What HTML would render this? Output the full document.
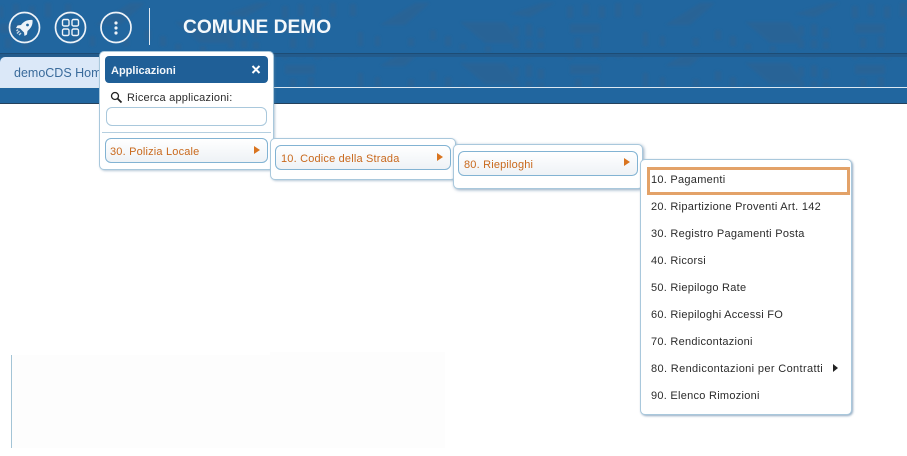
<!DOCTYPE html>
<html><head><meta charset="utf-8"><style>
*{box-sizing:border-box}
html,body{margin:0;padding:0;width:907px;height:456px;overflow:hidden;background:#fff;font-family:"Liberation Sans",sans-serif}
.a{position:absolute}
.t{position:absolute;white-space:nowrap;font-size:11px;line-height:14px;color:#2b2b2b;letter-spacing:.27px}
.panel{position:absolute;background:#fff;border:1px solid #a9c8dc;border-radius:5px;box-shadow:1px 1px 2px rgba(90,130,165,.45)}
.btn{position:absolute;height:25px;border:1px solid #82b3d3;border-radius:6px;background:linear-gradient(#fff,#eef2f6)}
.or{color:#c9691d;letter-spacing:.18px}
.tri{position:absolute;width:0;height:0;border-left:6px solid #d9741f;border-top:4.5px solid transparent;border-bottom:4.5px solid transparent}
</style></head><body>
<div class="a" style="left:0;top:0;width:907px;height:104px;background:#21669f"></div>
<svg class="a" style="left:0;top:0" width="907" height="104">
<defs>
<filter id="b" x="-5%" y="-5%" width="110%" height="110%"><feGaussianBlur stdDeviation="1.400"/></filter>
<pattern id="p" x="-5" y="0" width="285" height="54" patternUnits="userSpaceOnUse">
<g fill="#35608a">
<path d="M100 25L135 3H150L125 25Z M180 22H225L240 43H205Z M230 14L262 3H275L250 17Z M288 23H320V33H288Z"/>
<path d="M5 24H35V33H5Z M2 6h6v12H2Z M18 4h6v12h-6Z M34 6h6v12h-6Z M50 3h6v14h-6Z M70 4h6v12h-6Z M10 38h6v10h-6Z M28 36h6v12h-6Z M78 32h5v14h-5Z M95 36h5v10h-5Z"/>
<path d="M233 26h6v10h-6Z M246 24h6v12h-6Z M258 28h6v10h-6Z M233 40h6v8h-6Z M246 40h6v8h-6Z M258 42h6v7h-6Z M150 30h6v10h-6Z M165 36h6v10h-6Z M128 38h6v8h-6Z M180 44h6v6h-6Z M205 46h6v6h-6Z"/>
</g>
</pattern>
</defs>
<rect x="0" y="0" width="907" height="53" fill="url(#p)" opacity=".38" filter="url(#b)"/>
<g transform="translate(0,41)"><rect x="0" y="14" width="907" height="32" fill="url(#p)" opacity=".38" filter="url(#b)"/></g>
<rect x="0" y="53" width="907" height="1" fill="#1d4c75"/>
<rect x="0" y="54" width="907" height="3" fill="#235b8c"/>
<rect x="0" y="87" width="907" height="1" fill="#dbe8f2"/>
<rect x="0" y="88" width="907" height="15" fill="#21669f"/>
<rect x="0" y="103" width="907" height="1" fill="#24415c"/>
</svg>
<svg class="a" style="left:0;top:0" width="160" height="50" fill="none" stroke="#eef3f8">
<circle cx="24.500" cy="27.500" r="15" stroke-width="1.700"/>
<path d="M32.500 20C27.500 19.500 23.500 21.500 21 25L17.500 25.500L16 28L20 28.500L24 32.500L24.500 36L27 34.500L27.500 31C31 28 33 25 32.500 20Z" fill="#eef3f8" stroke="none"/>
<circle cx="27.500" cy="25" r="1.400" fill="#21669f" stroke="none"/>
<path d="M19.500 31L17 33.500M21 33L19 35M18 29.500L16.500 31" stroke-width="1.400" opacity=".8"/>
<circle cx="70.500" cy="27.500" r="15" stroke-width="1.700"/>
<rect x="62.500" y="19.500" width="6.500" height="6.500" rx="1.500" stroke-width="1.400"/>
<rect x="72" y="19.500" width="6.500" height="6.500" rx="1.500" stroke-width="1.400"/>
<rect x="62.500" y="29" width="6.500" height="6.500" rx="1.500" stroke-width="1.400"/>
<rect x="72" y="29" width="6.500" height="6.500" rx="1.500" stroke-width="1.400"/>
<circle cx="116" cy="27.500" r="15" stroke-width="1.700"/>
<g fill="#eef3f8" stroke="none"><circle cx="116" cy="23" r="1.600"/><circle cx="116" cy="28" r="1.600"/><circle cx="116" cy="33" r="1.600"/></g>
<rect x="149" y="8" width="1" height="37" fill="#dfe9f2" stroke="none"/>
</svg>
<div class="t" style="left:183px;top:16px;font-size:19.200px;line-height:24px;font-weight:bold;color:#f4f8fb;letter-spacing:0">COMUNE DEMO</div>
<div class="a" style="left:0;top:57px;width:110px;height:30px;background:#dbe8f8;border-radius:5px 5px 0 0"></div>
<div class="t" style="left:14px;top:65px;font-size:12.500px;line-height:16px;color:#3a6b9b;letter-spacing:0;width:86px;overflow:hidden">demoCDS Home</div>

<div class="a" style="left:11px;top:355px;width:1px;height:93px;background:#a3c4d6"></div>
<div class="a" style="left:12px;top:355px;width:433px;height:93px;background:#fdfdfd"></div>
<div class="a" style="left:270px;top:352px;width:175px;height:3px;background:#fdfdfd"></div>

<div class="panel" style="left:99px;top:51px;width:175px;height:119px"></div>
<div class="a" style="left:105px;top:56px;width:163px;height:27px;background:#1f5f97;border-radius:4px"></div>
<div class="t" style="left:111px;top:64px;font-weight:bold;color:#f2f6fa;letter-spacing:0">Applicazioni</div>
<svg class="a" style="left:251px;top:65px" width="10" height="10"><path d="M1.500 1L8.500 8M8.500 1L1.500 8" stroke="#fff" stroke-width="2"/></svg>
<svg class="a" style="left:110px;top:91px" width="13" height="13" fill="none" stroke="#222"><circle cx="5" cy="5" r="3.500" stroke-width="1.300"/><path d="M7.500 7.500L11.500 11.500" stroke-width="1.800"/></svg>
<div class="t" style="left:127px;top:91px;letter-spacing:.22px">Ricerca applicazioni:</div>
<div class="a" style="left:106px;top:107px;width:161px;height:19px;border:1px solid #a9c8dc;border-radius:6px;background:#fff"></div>
<div class="a" style="left:102px;top:132px;width:169px;height:1px;background:#b5cfe0"></div>
<div class="btn" style="left:105px;top:138px;width:163px"></div>
<div class="t or" style="left:110px;top:145px">30. Polizia Locale</div>
<div class="tri" style="left:254px;top:146px"></div>

<div class="panel" style="left:270px;top:138px;width:186px;height:42px"></div>
<div class="btn" style="left:275px;top:145px;width:176px"></div>
<div class="t or" style="left:281px;top:152px">10. Codice della Strada</div>
<div class="tri" style="left:437px;top:153px"></div>

<div class="panel" style="left:453px;top:144px;width:190px;height:45px;box-shadow:1px 1px 3px rgba(70,110,150,.6)"></div>
<div class="btn" style="left:458px;top:151px;width:180px"></div>
<div class="t or" style="left:464px;top:158px">80. Riepiloghi</div>
<div class="tri" style="left:624px;top:158px"></div>

<div class="panel" style="left:640px;top:159px;width:212px;height:256px;box-shadow:1px 1px 2px rgba(70,110,150,.6)"></div>
<div class="a" style="left:647px;top:167px;width:203px;height:28px;border:3px solid #e3a268"></div>
<div class="t" style="left:651px;top:173px">10. Pagamenti</div>
<div class="t" style="left:651px;top:200px">20. Ripartizione Proventi Art. 142</div>
<div class="t" style="left:651px;top:227px">30. Registro Pagamenti Posta</div>
<div class="t" style="left:651px;top:254px">40. Ricorsi</div>
<div class="t" style="left:651px;top:281px">50. Riepilogo Rate</div>
<div class="t" style="left:651px;top:308px">60. Riepiloghi Accessi FO</div>
<div class="t" style="left:651px;top:335px">70. Rendicontazioni</div>
<div class="t" style="left:651px;top:362px;letter-spacing:.36px">80. Rendicontazioni per Contratti</div>
<div class="tri" style="left:833px;top:364px;border-left:5px solid #222;border-top-width:4px;border-bottom-width:4px"></div>
<div class="t" style="left:651px;top:389px">90. Elenco Rimozioni</div>
</body></html>
